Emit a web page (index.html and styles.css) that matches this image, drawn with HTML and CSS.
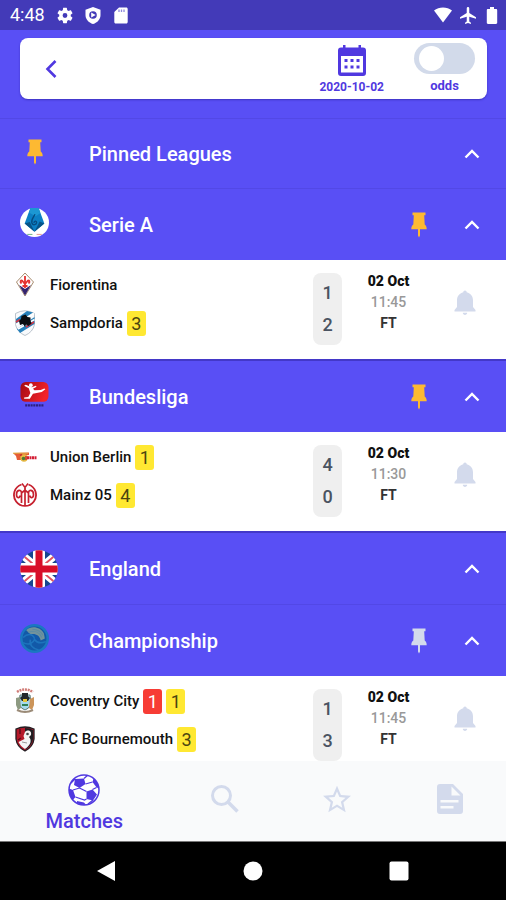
FILE: index.html
```html
<!DOCTYPE html>
<html lang="en">
<head>
<meta charset="utf-8">
<meta name="viewport" content="width=device-width, initial-scale=1">
<title>Matches</title>
<link rel="stylesheet" href="styles.css">
</head>
<body>
<svg class="sprite" aria-hidden="true">
  <symbol id="pin" viewBox="0 0 16 26"><path d="M1.5 0.5h13v2.8h-1.3l.5 9.2c1.200.9 2 2.300 2 4.800H9v6.200l-1 2-1-2v-6.200H.3c0-2.500.8-3.900 2-4.800l.5-9.200H1.500z" fill="currentColor"/></symbol>
  <symbol id="chevron" viewBox="0 0 16 10"><path d="M1.500 8.500 8 2l6.500 6.500" fill="none" stroke="currentColor" stroke-width="2.400"/></symbol>
  <symbol id="bell" viewBox="0 0 22 26"><path d="M11 .5c1 0 1.700.7 1.700 1.800 4 1 6.300 4.200 6.300 8.200v6.500l2.500 3v1.500h-21V20L3 17v-6.500c0-4 2.300-7.200 6.300-8.200C9.300 1.200 10 .5 11 .5zM8.800 22.800h4.400c0 1.300-1 2.200-2.200 2.200s-2.200-.9-2.200-2.200z" fill="currentColor"/></symbol>
</svg>
<div class="app">
  <div class="status">
    <span class="clock">4:48</span>
    <svg class="st-icon" viewBox="2 2 20 20" aria-hidden="true"><path fill="#fff" d="M19.140 12.940c.04-.3.060-.61.060-.94 0-.32-.02-.64-.07-.94l2.030-1.580a.49.490 0 0 0 .12-.61l-1.920-3.320a.49.490 0 0 0-.59-.22l-2.390.96c-.5-.38-1.030-.7-1.620-.94l-.36-2.540a.48.480 0 0 0-.48-.41h-3.840c-.24 0-.43.170-.47.410l-.36 2.540c-.59.240-1.130.57-1.620.94l-2.390-.96a.48.480 0 0 0-.59.220L2.740 8.870c-.12.210-.08.470.12.610l2.030 1.580c-.05.3-.09.630-.09.940s.02.640.07.940l-2.030 1.580a.49.490 0 0 0-.12.610l1.920 3.320c.12.220.37.290.59.220l2.390-.96c.5.380 1.030.7 1.620.94l.36 2.540c.05.240.24.410.48.410h3.840c.24 0 .44-.17.47-.41l.36-2.540c.59-.24 1.130-.56 1.620-.94l2.390.96c.22.080.47 0 .59-.22l1.920-3.320a.48.480 0 0 0-.12-.61zM12 15a3 3 0 1 1 0-6 3 3 0 0 1 0 6z"/></svg>
    <svg class="st-icon" viewBox="0 0 16 17" aria-hidden="true"><path fill="#fff" d="M8 0l7.500 2.800v5.200c0 4.200-3 7.600-7.500 9C3.500 15.600.5 12.200.5 8V2.800z"/><circle cx="8" cy="8" r="3.800" fill="#433ab8"/><path d="M6.200 5.500l4.500 2.500-4.500 2.500z" fill="#fff"/></svg>
    <svg class="st-icon" viewBox="0 0 16 17" aria-hidden="true"><path fill="#fff" d="M6 .5h7.200c.9 0 1.500.6 1.500 1.500v13c0 .9-.6 1.500-1.500 1.500H2.800c-.9 0-1.500-.6-1.500-1.500V5z"/><path d="M6 2.500v2.500M8.500 2.500v2.500M11 2.500v2.500" stroke="#8f88dc" stroke-width="1.300"/></svg>
    <span class="spacer"></span>
    <svg class="st-wide" viewBox="0 0 18 16" aria-hidden="true"><path fill="#fff" d="M0 3.500C5-.5 13-.5 18 3.500L9 15.500z"/></svg>
    <svg class="st-icon" viewBox="2 2 19 20" aria-hidden="true"><path fill="#fff" d="M21 16v-2l-8-5V3.500a1.500 1.500 0 0 0-3 0V9l-8 5v2l8-2.500V19l-2 1.500V22l3.500-1 3.500 1v-1.500L13 19v-5.500z"/></svg>
    <svg class="st-slim" viewBox="0 0 12 17" aria-hidden="true"><path fill="#fff" d="M4 0h4v2h2c.7 0 1.200.5 1.200 1.200v12.600c0 .7-.5 1.200-1.200 1.200H2C1.300 17 .8 16.500.8 15.800V3.200C.8 2.500 1.300 2 2 2h2z"/></svg>
  </div>

  <header class="top">
    <div class="toolbar">
      <button class="back" type="button" aria-label="Back"><svg viewBox="0 0 12 18" aria-hidden="true"><path d="M10.500 1 2.500 9l8 8" fill="none" stroke="currentColor" stroke-width="2.600"/></svg></button>
      <button class="date" type="button">
        <svg viewBox="0 0 28 31" aria-hidden="true"><path fill="currentColor" fill-rule="evenodd" d="M5 0h2.500v2.500h13V0H23v2.500h2A3 3 0 0 1 28 5.500V28a3 3 0 0 1-3 3H3a3 3 0 0 1-3-3V5.500a3 3 0 0 1 3-3h2zM3 11v16.500h22V11z"/><path fill="currentColor" d="M6.500 14h3v3h-3zm6 0h3v3h-3zm6 0h3v3h-3zm-12 6.500h3v3h-3zm6 0h3v3h-3zm6 0h3v3h-3z"/></svg>
        <span>2020-10-02</span>
      </button>
      <label class="odds"><input type="checkbox" role="switch"><span>odds</span></label>
    </div>
  </header>

  <main class="list">
    <section class="league pinned">
      <span class="mark gold"><svg class="pin" aria-hidden="true"><use href="#pin"/></svg></span>
      <h2>Pinned Leagues</h2>
      <button class="toggle" type="button" aria-label="Collapse Pinned Leagues"><svg aria-hidden="true"><use href="#chevron"/></svg></button>
    </section>

    <section class="league">
      <span class="mark"><svg class="badge" viewBox="0 0 28 28" aria-hidden="true"><circle cx="14" cy="14" r="14" fill="#fff"/><path d="M10 0h8l5.500 15-9.500 8-9.500-8z" fill="#0c7fc4"/><path d="M10 0h8l1.500 5-4.500 3-6-3.500z" fill="#1c97d3"/><path d="M4.500 15l5-1.500 4.500 9.500zM23.500 15l-4.500-2-5 10z" fill="#075387"/><path d="M14.500 6c-1.500 3-4 5-3 8.500.8 2.500 4.500 2 4.500-.5 0-2-2.500-1.500-2.500.5" fill="none" stroke="#064c80" stroke-width="1.300"/><path d="M7 25.500h5" stroke="#75b68a"/><path d="M16 25.500h5" stroke="#e79a95"/></svg></span>
      <h2>Serie A</h2>
      <button class="pinbtn gold" type="button" aria-label="Unpin Serie A"><svg class="pin" aria-hidden="true"><use href="#pin"/></svg></button>
      <button class="toggle" type="button" aria-label="Collapse Serie A"><svg aria-hidden="true"><use href="#chevron"/></svg></button>
    </section>
    <article class="match">
      <ul class="teams">
        <li><svg class="crest" viewBox="0 0 24 26" aria-hidden="true"><path d="M12 1l8.500 9L12 24 3.500 10z" fill="#fff" stroke="#a88d70" stroke-width="1"/><path d="M6 13l6 4 6-4-6 10.500z" fill="#33236f"/><path d="M12 4v12M8.500 11.500c-2-2-.5-4 1-2.500l2.500 3 2.500-3c1.500-1.500 3 .5 1 2.500M9.500 14h5" fill="none" stroke="#e5312f" stroke-width="1.800"/></svg>Fiorentina</li>
        <li><svg class="crest" viewBox="0 0 24 26" aria-hidden="true"><path d="M2.500 3.500Q12-2 21.500 3.500v11Q20 22 12 25.500 4 22 2.500 14.500z" fill="#f8fafc" stroke="#a9b4bf" stroke-width=".8"/><path d="M3 9L14 1l6 1.500L3 14z" fill="#2781ba"/><path d="M4 19L21.500 7v7L7 23z" fill="#2781ba"/><path d="M3 14.500L21 3.500M5 19l16.500-9.500" stroke="#fff" stroke-width="1.500"/><path d="M3 12l4-2.500M13 17l8-5" stroke="#d93442" stroke-width="1.500"/><path d="M12.500 4.500l2 2.500 3 .5v3l1 3-3 2.500-2.500-1.500-1 2.500-2-3-3 1-1-4 2-2 .5-3z" fill="#0a0d10"/></svg>Sampdoria<span class="card yellow">3</span></li>
      </ul>
      <div class="score"><span>1</span><span>2</span></div>
      <div class="when"><b>02 Oct</b><time>11:45</time><span>FT</span></div>
      <button class="bell" type="button" aria-label="Notify me"><svg aria-hidden="true"><use href="#bell"/></svg></button>
    </article>

    <section class="league raised">
      <span class="mark"><svg class="badge" viewBox="0 0 28 28" aria-hidden="true"><defs><linearGradient id="bl" x2="1" y2=".3"><stop offset="0" stop-color="#a40b12"/><stop offset="1" stop-color="#f2232a"/></linearGradient></defs><rect x=".5" y="2" width="27" height="19" rx="5" fill="url(#bl)"/><path d="M9 6L5.500 4.500 4 5.500l4.500 2.500 1.500 4.500-2 4-4 .5v1.200h5.500l3-5L21 11.500l3.500-2.500-1-.8-3.500 1.500-6 .3-1.500-1.500L16 6.500l-.8-1-3.700 1.500z" fill="#fff"/><circle cx="10.500" cy="5" r="1.800" fill="#fff"/><path d="M5 24.500h18" stroke="#2b2180" stroke-width="2" stroke-dasharray="2 .6"/></svg></span>
      <h2>Bundesliga</h2>
      <button class="pinbtn gold" type="button" aria-label="Unpin Bundesliga"><svg class="pin" aria-hidden="true"><use href="#pin"/></svg></button>
      <button class="toggle" type="button" aria-label="Collapse Bundesliga"><svg aria-hidden="true"><use href="#chevron"/></svg></button>
    </section>
    <article class="match">
      <ul class="teams">
        <li><svg class="crest" viewBox="0 0 24 26" aria-hidden="true"><path d="M0 9l16-.5v2.500l-6 .5-2 1.500v3H4l-1-4z" fill="#e65c36"/><path d="M0 9.200h15" stroke="#e3ae43" stroke-width="1"/><circle cx="11" cy="14" r="3.700" fill="#e6b843"/><circle cx="10.500" cy="14.500" r="1.800" fill="#4c7c35"/><path d="M7 11.500l2-1M13 12v4" stroke="#c6302c" stroke-width="1.500"/><path d="M14 13.800h10" stroke="#d31d34" stroke-width="3" stroke-dasharray="2 .5"/></svg>Union Berlin<span class="card yellow">1</span></li>
        <li><svg class="crest" viewBox="0 0 24 26" aria-hidden="true"><g fill="none" stroke="#c6202e"><path d="M8.500 2.500A11 11 0 1 0 15.500 2.500" stroke-width="1.800"/><path d="M12 6v17M8.500 21V11c0-4-5-3.500-5 1.500 0 4 3.500 4 3.500 1M15.500 21V11c0-4 5-3.500 5 1.500 0 4-3.500 4-3.500 1M8.500 11l3.500-3 3.500 3" stroke-width="1.700"/><path d="M9 1.500l3 4 3-4" stroke-width="1.500"/></g></svg>Mainz 05<span class="card yellow">4</span></li>
      </ul>
      <div class="score"><span>4</span><span>0</span></div>
      <div class="when"><b>02 Oct</b><time>11:30</time><span>FT</span></div>
      <button class="bell" type="button" aria-label="Notify me"><svg aria-hidden="true"><use href="#bell"/></svg></button>
    </article>

    <section class="league country raised">
      <span class="mark"><svg class="flag" viewBox="0 0 38 38" aria-hidden="true"><defs><clipPath id="round"><circle cx="19" cy="19" r="18.800"/></clipPath></defs><g clip-path="url(#round)"><path fill="#16468f" d="M0 0h38v38H0z"/><path d="M0 3l38 32M38 3L0 35" stroke="#fff" stroke-width="7.500"/><path d="M0 3l38 32M38 3L0 35" stroke="#e0525f" stroke-width="2"/><path d="M19 0v38M0 19h38" stroke="#fff" stroke-width="12"/><path d="M19 0v38M0 19h38" stroke="#d80d28" stroke-width="7"/></g></svg></span>
      <h2>England</h2>
      <button class="toggle" type="button" aria-label="Collapse England"><svg aria-hidden="true"><use href="#chevron"/></svg></button>
    </section>

    <section class="league">
      <span class="mark"><svg class="badge" viewBox="0 0 28 28" aria-hidden="true"><circle cx="14" cy="14" r="14" fill="#1a78c1"/><circle cx="14" cy="14" r="11.500" fill="#1259a8"/><path d="M6 6c5-5 14-3 17 3l1 5-4 2c-1-5-5-7-10-6z" fill="#71939c"/><path d="M3 13c4-4 9-4 11 1M3 18c6 3 10 0 11-3 2 3 6 4 11 2M10 15c-1 5 2 9 8 10" fill="none" stroke="#1d74bd" stroke-width="1.500"/><path d="M8 8c6-2 11 0 13 5M12 5c5 0 9 3 10 6" fill="none" stroke="#5a8aa4"/></svg></span>
      <h2>Championship</h2>
      <button class="pinbtn" type="button" aria-label="Pin Championship"><svg class="pin" aria-hidden="true"><use href="#pin"/></svg></button>
      <button class="toggle" type="button" aria-label="Collapse Championship"><svg aria-hidden="true"><use href="#chevron"/></svg></button>
    </section>
    <article class="match">
      <ul class="teams">
        <li><svg class="crest" viewBox="0 0 24 26" aria-hidden="true"><path d="M4 4Q12-1 20 4" fill="none" stroke="#d17d78" stroke-width="2.500" stroke-dasharray="2 .8"/><path d="M7 7h10l1 9q-2 5-6 6-4-1-6-6z" fill="#a6d9ee" stroke="#627b75"/><path d="M3 10l4-1 1 11-3 2-2-5z" fill="#8d9a82"/><path d="M17 11l4-2v8l-2 5-3-2z" fill="#cc955a"/><path d="M9 5h6v3l2 2-2 3H9l-2-3 2-2z" fill="#22282b"/><path d="M10 11h4v3h-4z" fill="#e4c43c"/><path d="M9 17h6" stroke="#2f8257" stroke-width="2"/><path d="M4 22q8 4 16 0" fill="none" stroke="#9b8b78" stroke-width="2"/></svg>Coventry City<span class="card red">1</span><span class="card yellow">1</span></li>
        <li><svg class="crest" viewBox="0 0 24 26" aria-hidden="true"><path d="M3 3Q12-1 21 3v10q-1 8-9 12-8-4-9-12z" fill="#b5192a" stroke="#201d21" stroke-width="1.300"/><path d="M12 2q5 0 8 2v9q-1 7-8 10.500z" fill="#201d21"/><path d="M7 8V3M5 14l3-2" stroke="#5c0f19" stroke-width="1.500"/><path d="M12 6c3-3 7-1 6 3l-2 2c3 3 2 8-4 12-3-2-5-4-6.500-7l6-3-1-3z" fill="#f4f4f4"/><circle cx="14.500" cy="8" r="1.300" fill="#444"/><path d="M9 16l5 1" stroke="#999"/></svg>AFC Bournemouth<span class="card yellow">3</span></li>
      </ul>
      <div class="score"><span>1</span><span>3</span></div>
      <div class="when"><b>02 Oct</b><time>11:45</time><span>FT</span></div>
      <button class="bell" type="button" aria-label="Notify me"><svg aria-hidden="true"><use href="#bell"/></svg></button>
    </article>
  </main>

  <nav class="tabs" aria-label="Main">
    <a class="active" href="#"><svg class="ball" viewBox="0 0 32 32" aria-hidden="true"><defs><clipPath id="ballclip"><circle cx="16" cy="16" r="15"/></clipPath></defs><circle cx="16" cy="16" r="15" fill="#fff"/><g clip-path="url(#ballclip)" fill="currentColor"><path d="M7 5l9-.5 1.500 5.500-6 4L6 11zM18.500 17.500l6-2 4.500 5-4 6-6.500-1.500zM0 14l5 2 2.500 7-3.500 4-4-5zM26 3l6 10-3 1-4.500-6zM9 27l7 1.500 3 3.500H9z"/><path d="M17.500 10l7-2M11.500 14l-6.500 2M11.500 14l7 3.500M7.500 23l9 3 2-1M24.500 15.500l4-2M16 4.500L20 1M7 5L3 9M25 26l-5 4" fill="none" stroke="currentColor" stroke-width="1.300"/></g><circle cx="16" cy="16" r="15" fill="none" stroke="currentColor" stroke-width="1.500"/></svg><span>Matches</span></a>
    <a href="#" aria-label="Search"><svg class="tab-icon" viewBox="0 0 28 28" aria-hidden="true"><circle cx="10.500" cy="10.500" r="9" fill="none" stroke="currentColor" stroke-width="3"/><path d="M17 17l9.500 9.500" stroke="currentColor" stroke-width="3.500"/></svg></a>
    <a href="#" aria-label="Favourites"><svg class="tab-icon" viewBox="2 2 20 19" aria-hidden="true"><path fill="currentColor" d="M22 9.240l-7.190-.62L12 2 9.190 8.630 2 9.240l5.460 4.730L5.820 21 12 17.270 18.180 21l-1.630-7.030zM12 15.400l-3.760 2.270 1-4.280-3.320-2.880 4.380-.38L12 6.100l1.710 4.040 4.380.38-3.320 2.880 1 4.280z"/></svg></a>
    <a href="#" aria-label="News"><svg class="doc" viewBox="0 0 26 30" aria-hidden="true"><path fill="currentColor" fill-rule="evenodd" d="M3 0h13l10 10v17a3 3 0 0 1-3 3H3a3 3 0 0 1-3-3V3a3 3 0 0 1 3-3zM14.500 2.500v9h9zM3.500 16v2.500h18V16zM3.500 22v2.500h13V22z"/></svg></a>
  </nav>

  <div class="sysnav">
    <button type="button" aria-label="System back"><svg viewBox="0 0 20 20" aria-hidden="true"><path d="M0 10L18 0v20z" fill="#fff"/></svg></button>
    <button type="button" aria-label="Home"><svg viewBox="0 0 20 20" aria-hidden="true"><circle cx="10" cy="10" r="9.500" fill="#fff"/></svg></button>
    <button type="button" aria-label="Recent apps"><svg viewBox="0 0 20 20" aria-hidden="true"><rect x=".5" y=".5" width="19" height="19" rx="2" fill="#fff"/></svg></button>
  </div>
</div>
</body>
</html>
```
FILE: styles.css
```css
:root {
  --brand: #594ff5;
  --brand-dark: #433ab8;
  --ink: #5038e0;
  --muted: #d3daec;
}

* { box-sizing: border-box; }

body {
  margin: 0;
  font-family: Roboto, "Liberation Sans", sans-serif;
  color: #111;
  background: #fff;
}

button {
  padding: 0;
  border: 0;
  background: none;
  color: inherit;
  font: inherit;
}

svg { display: block; }

.sprite {
  position: absolute;
  width: 0;
  height: 0;
}

.app {
  display: flex;
  flex-direction: column;
  height: 100vh;
}

/* System status bar */
.status {
  display: flex;
  align-items: center;
  gap: 12px;
  flex: none;
  height: 30px;
  padding: 0 8px 0 10px;
  background: var(--brand-dark);
  color: #fff;
}
.clock { font-size: 18px; line-height: 30px; }
.spacer { flex: 1; }
.st-icon { width: 16px; height: 17px; }
.st-wide { width: 18px; height: 16px; margin-right: -4px; }
.st-slim { width: 12px; height: 17px; margin-left: -2px; }

/* Toolbar */
.top {
  flex: none;
  padding: 8px 19px 19px 20px;
  background: var(--brand);
}
.toolbar {
  display: flex;
  align-items: center;
  height: 61px;
  padding: 0 12px 0 25px;
  border-radius: 8px;
  background: #fff;
  color: var(--ink);
  box-shadow: 0 1px 2px #3d33c0;
}
.back { margin-right: auto; }
.back svg { width: 12px; height: 18px; }
.date,
.odds {
  display: flex;
  flex-direction: column;
  align-items: center;
  gap: 4px;
  font-size: 12px;
  line-height: 16px;
  font-weight: 700;
}
.date {
  gap: 3px;
  margin-right: 30px;
  padding-top: 2px;
}
.date svg { width: 28px; height: 31px; }
.odds { font-size: 13px; }
.odds input {
  appearance: none;
  display: flex;
  align-items: center;
  width: 61px;
  height: 31px;
  margin: 0;
  padding: 0 5px;
  border-radius: 16px;
  background: #d2daea;
}
.odds input::before {
  content: "";
  width: 25px;
  height: 25px;
  border-radius: 50%;
  background: #fff;
}
.odds input:checked { justify-content: flex-end; }

/* League list */
.list {
  flex: 1;
  min-height: 0;
  overflow-y: auto;
  scrollbar-width: none;
}
.league {
  display: flex;
  align-items: center;
  height: 72px;
  padding: 0 14px 0 20px;
  border-top: 1px solid #5248e6;
  background: var(--brand);
  color: #fff;
}
.league.pinned { height: 70px; }
.league.raised { height: 73px; border-top: 2px solid #4338c8; }
.league h2 {
  flex: 1;
  margin: 0;
  font-size: 20px;
  line-height: 24px;
  font-weight: 500;
}
.mark {
  display: flex;
  flex: none;
  width: 69px;
  padding-bottom: 4px;
}
.country .mark { padding-bottom: 0; }
.mark .pin { margin-left: 7px; }
.pin { width: 16px; height: 26px; }
.badge { width: 29px; height: 29px; }
.flag { width: 38px; height: 38px; }
.pinbtn,
.toggle {
  display: flex;
  align-items: center;
  justify-content: center;
  width: 40px;
  height: 40px;
}
.pinbtn { margin-right: 13px; color: var(--muted); }
.toggle svg { width: 16px; height: 10px; }
.gold { color: #fdb932; }

/* Match rows */
.match {
  display: grid;
  grid-template-columns: 1fr 29px 93px 60px;
  align-items: start;
  height: 99px;
  padding: 6px 11px 0 12px;
  background: #fff;
}
.teams {
  margin: 0;
  padding: 0;
  list-style: none;
}
.teams li {
  display: flex;
  align-items: center;
  height: 38px;
  font-size: 15px;
  font-weight: 500;
}
.crest { width: 26px; height: 26px; margin-right: 12px; }
.card {
  width: 19px;
  margin-left: 4px;
  border-radius: 3px;
  font-size: 18px;
  line-height: 25px;
  font-weight: 400;
  text-align: center;
}
.yellow { background: #ffe832; color: #4b4510; }
.red { background: #f73c35; color: #fff; }
.score {
  display: flex;
  flex-direction: column;
  margin-top: 7px;
  padding: 4px 0;
  border-radius: 8px;
  background: #efefef;
  color: #4a5361;
  font-size: 18px;
  line-height: 32px;
  font-weight: 500;
  text-align: center;
}
.when {
  display: flex;
  flex-direction: column;
  margin-top: 5px;
  font-size: 14px;
  line-height: 21px;
  font-weight: 700;
  text-align: center;
}
.when time { color: #999; font-weight: 500; }
.when span { color: #333; }
.bell {
  display: flex;
  justify-content: center;
  margin-top: 24px;
  color: var(--muted);
}
.bell svg { width: 22px; height: 26px; }

/* Tab bar */
.tabs {
  display: flex;
  flex: none;
  height: 80px;
  background: #f9fafb;
}
.tabs a {
  display: flex;
  flex: 2;
  flex-direction: column;
  align-items: center;
  justify-content: center;
  padding-bottom: 4px;
  color: var(--muted);
  text-decoration: none;
}
.tabs .active {
  flex: 3;
  gap: 3px;
  padding: 4px 0 0;
  color: var(--ink);
  font-size: 20px;
  line-height: 24px;
  font-weight: 500;
}
.ball { width: 32px; height: 32px; }
.tab-icon { width: 28px; height: 28px; }
.doc { width: 26px; height: 30px; }

/* System navigation */
.sysnav {
  display: flex;
  align-items: center;
  justify-content: center;
  flex: none;
  height: 59px;
  border-top: 1px solid #777;
  background: #000;
}
.sysnav button {
  display: flex;
  justify-content: center;
  width: 146px;
}
.sysnav svg { width: 20px; height: 20px; }
```
